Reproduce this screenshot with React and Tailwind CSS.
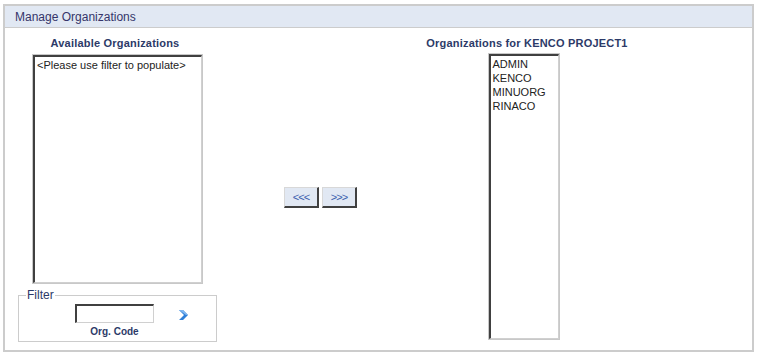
const available = [];
const assigned = ["ADMIN", "KENCO", "MINUORG", "RINACO"];

const ListBox = ({ items, placeholder, className }) => (
  <div className={`border border-[#c8c8c8] ${className}`}>
    <div className="h-full border-t-2 border-l-2 border-t-[#404040] border-l-[#404040] border-b border-r border-b-[#d0d0d0] border-r-[#d0d0d0] bg-white pl-[2px] pt-[1px] text-[11px] leading-[14px] text-[#222]">
      {placeholder && <div>{placeholder}</div>}
      {items.map((it) => (
        <div key={it}>{it}</div>
      ))}
    </div>
  </div>
);

const MoveButton = ({ label }) => (
  <button className="w-[35px] h-[21px] bg-[#e1e8f3] border border-t-[#d8d8d8] border-l-[#d8d8d8] border-b-2 border-r-2 border-b-[#404040] border-r-[#404040] text-[11px] text-[#3b5fae] leading-none tracking-[-1px]">
    {label}
  </button>
);

const App = () => {
  return (
    <div className="w-[758px] h-[356px] bg-white pt-[4px] pl-[3px] font-['Liberation_Sans',Arial,sans-serif]">
      <div className="w-[751px] h-[348px] border-2 border-[#cccccc] bg-white flex flex-col">
        <div className="h-[22px] bg-[#e1e8f3] border-b border-[#cccccc] flex items-center pl-[10px] text-[12px] text-[#35356a]">
          Manage Organizations
        </div>

        <div className="flex flex-1">
          {/* left column */}
          <div className="ml-[13px] w-[199px] flex flex-col">
            <div className="mt-[9px] mr-[5px] text-center text-[11px] font-bold text-[#2c3a68] leading-[13px] tracking-[0.2px]">
              Available Organizations
            </div>
            <ListBox
              items={available}
              placeholder="<Please use filter to populate>"
              className="mt-[4px] mx-auto w-[171px] h-[230px]"
            />
            <fieldset className="mt-[5px] w-[199px] h-[53px] border border-[#cccccc] px-[7px] pb-0 m-0">
              <legend className="px-[1px] text-[12px] text-[#2c3a68] leading-[12px]">Filter</legend>
              <div className="flex items-start">
                <div className="ml-[49px] flex flex-col items-center">
                  <input
                    type="text"
                    className="w-[79px] h-[19px] mt-[3px] border border-t-2 border-l-2 border-t-[#404040] border-l-[#404040] border-b-[#d0d0d0] border-r-[#d0d0d0] bg-white outline-none"
                  />
                  <div className="mt-[3px] text-[10px] font-bold text-[#2c3a68] leading-[12px]">Org. Code</div>
                </div>
                <svg className="ml-[25px] mt-[9px]" width="9" height="10" viewBox="0 0 9 10">
                  <path d="M0 0 L4 0 L9 5 L4 10 L0 10 L5 5 Z" fill="#2f7fd8" />
                  <path d="M0 0 L4 0 L9 5 L7 5 Z" fill="#7fb6f0" />
                </svg>
              </div>
            </fieldset>
          </div>

          {/* middle */}
          <div className="ml-[67px] mt-[159px] flex gap-[3px] self-start">
            <MoveButton label="<<<" />
            <MoveButton label=">>>" />
          </div>

          {/* right column */}
          <div className="ml-[55px] w-[220px] flex flex-col items-center">
            <div className="mt-[9px] ml-[10px] text-center text-[11px] font-bold text-[#2c3a68] leading-[13px] tracking-[0.2px]">
              Organizations for KENCO PROJECT1
            </div>
            <ListBox items={assigned} className="mt-[3px] ml-[3px] w-[72px] h-[287px]" />
          </div>
        </div>
      </div>
    </div>
  );
};

export default App;
